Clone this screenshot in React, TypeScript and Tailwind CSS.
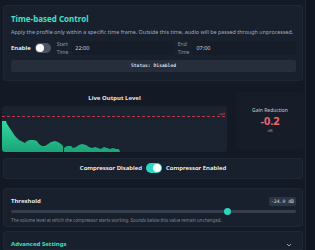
import React from "react";

const wave =
  "M0,46 L0,15 L4,15 L5,18 L7,21 L9,24 L11,27 L13,30 L15,32 L17,34 L19,35 L21,36 L23,37 L25,35 L28,34 L32,34 L35,35 L37,38 L40,40 L43,40 L46,38 L49,36 L53,35 L56,36 L59,38 L61,40 L61,46 L62,46 L62,42 L65,40 L69,40 L71,42 L74,41 L77,39 L80,38 L84,39 L87,41 L90,42 L93,41 L96,42 L99,43 L102,41 L105,42 L108,43 L111,42 L114,43 L117,43 L118,46 Z";

function Toggle({ on }: { on: boolean }) {
  return (
    <div
      className={
        on
          ? "w-[16px] h-[10px] rounded-full bg-[#2dd4bf] flex items-center justify-end px-[1px]"
          : "w-[16px] h-[10px] rounded-full bg-[#4b5563] flex items-center justify-start px-[1px]"
      }
    >
      <div className="w-[8px] h-[8px] rounded-full bg-white" />
    </div>
  );
}

const mono = { fontFamily: '"DejaVu Sans Mono", monospace' };

export default function App() {
  return (
    <div
      className="w-[315px] h-[250px] bg-[#131a26] flex overflow-hidden text-white"
      style={{ fontFamily: '"Noto Sans", "Open Sans", sans-serif' }}
    >
      <div className="w-[305px] flex flex-col">
        {/* Time-based control */}
        <div className="mt-[5px] ml-[3px] w-[300px] h-[77px] rounded-[3px] bg-[#19202d] border border-[#1f2734] pl-[7px] pr-[6px] pt-[7px]">
          <h2 className="text-[8px] leading-[11px] font-bold text-[#3ee0c4]">Time-based Control</h2>
          <p className="mt-[4px] text-[5.4px] leading-[8px] text-[#a3abb8] whitespace-nowrap">
            Apply the profile only within a specific time frame. Outside this time, audio will be passed through unprocessed.
          </p>
          <div className="mt-[2px] h-[20px] flex items-center">
            <span className="text-[6px] font-semibold text-white">Enable</span>
            <div className="ml-[4px]">
              <Toggle on={false} />
            </div>
            <div className="ml-[6px] flex flex-col text-[5px] leading-[8px] text-[#8b93a1]">
              <span>Start</span>
              <span>Time</span>
            </div>
            <div className="ml-[4px] flex-1 h-[14px] rounded-[2px] bg-[#161d29] flex items-center px-[3px] text-[5.5px] text-[#c9ced6]">
              22:00
            </div>
            <div className="ml-[4px] flex flex-col text-[5px] leading-[8px] text-[#8b93a1]">
              <span>End</span>
              <span>Time</span>
            </div>
            <div className="ml-[3px] flex-1 h-[14px] rounded-[2px] bg-[#161d29] flex items-center px-[4px] text-[5.5px] text-[#c9ced6]">
              07:00
            </div>
          </div>
          <div
            className="mt-[2px] h-[12px] rounded-[2px] bg-[#262e3c] flex items-center justify-center text-[4.7px] font-bold text-[#d5d9df]"
            style={mono}
          >
            Status: Disabled
          </div>
        </div>

        {/* Live output */}
        <div className="mt-[12px] flex items-start">
          <div className="ml-[2px] w-[225px] flex flex-col items-center">
            <span className="text-[6px] leading-[10px] font-bold text-[#e5e7eb]">Live Output Level</span>
            <div className="relative mt-[3px] w-[225px] h-[46px] rounded-[3px] bg-[#1b2230] overflow-hidden">
              <div className="absolute left-0 right-[2px] top-[10px] border-t border-dashed border-[#b83a4a]" />
              <span className="absolute right-[2px] top-[6px] text-[3.5px] leading-[4px] text-[#e0576a]">-out</span>
              <svg width="225" height="46" className="absolute left-0 top-0">
                <defs>
                  <linearGradient id="g" x1="0" y1="0" x2="0" y2="1">
                    <stop offset="0" stopColor="#34d8a0" />
                    <stop offset="1" stopColor="#1aa478" />
                  </linearGradient>
                </defs>
                <path d={wave} fill="url(#g)" />
              </svg>
            </div>
          </div>
          <div className="ml-[9px] mt-[-1px] w-[68px] h-[57px] rounded-[3px] bg-[#161d29] flex flex-col items-center justify-center">
            <span className="text-[5px] leading-[7px] text-[#c9ced6]">Gain Reduction</span>
            <span className="mt-[1px] text-[11px] leading-[12px] font-bold text-[#f4676f]">-0.2</span>
            <span className="mt-[1px] text-[4px] leading-[5px] text-[#8b93a1]">dB</span>
          </div>
        </div>

        {/* Compressor switch */}
        <div className="mt-[6px] ml-[3px] w-[300px] h-[21px] rounded-[3px] bg-[#19202d] border border-[#1f2734] flex items-center justify-center gap-[4px] text-[6px] font-semibold">
          <span>Compressor Disabled</span>
          <Toggle on={true} />
          <span>Compressor Enabled</span>
        </div>

        {/* Threshold */}
        <div className="mt-[9px] ml-[3px] w-[300px] h-[40px] rounded-[3px] bg-[#19202d] border border-[#1f2734] pl-[7px] pr-[6px] pt-[8px]">
          <div className="flex items-center justify-between h-[10px]">
            <span className="text-[6px] font-bold text-[#e5e7eb]">Threshold</span>
            <span className="h-[9px] px-[2px] rounded-[2px] bg-[#2c3544] text-[4.8px] leading-[9px] text-[#d5d9df]" style={mono}>
              -24.0 dB
            </span>
          </div>
          <div className="relative mt-[3px] h-[3px] rounded-full bg-[#353e4d]">
            <div className="absolute left-[213px] top-[-2px] w-[7px] h-[7px] rounded-full bg-[#2dd4bf]" />
          </div>
          <p className="mt-[3px] text-[4.4px] leading-[8px] text-[#7d8593] whitespace-nowrap">
            The volume level at which the compressor starts working. Sounds below this value remain unchanged.
          </p>
        </div>

        {/* Advanced */}
        <div className="mt-[4px] ml-[3px] w-[300px] flex-1 rounded-t-[3px] bg-[#19202d] border border-[#1f2734] px-[7px] pt-[7px] flex justify-between">
          <span className="text-[6px] leading-[10px] font-bold text-[#3ee0c4]">Advanced Settings</span>
          <svg width="6" height="4" viewBox="0 0 6 4" className="mt-[4px] mr-[3px]">
            <path d="M1 1 L3 3 L5 1" stroke="#9aa3b0" strokeWidth="1" fill="none" />
          </svg>
        </div>
      </div>
      <div className="flex-1 bg-[#111722] border-l border-[#1f2734]" />
    </div>
  );
}
